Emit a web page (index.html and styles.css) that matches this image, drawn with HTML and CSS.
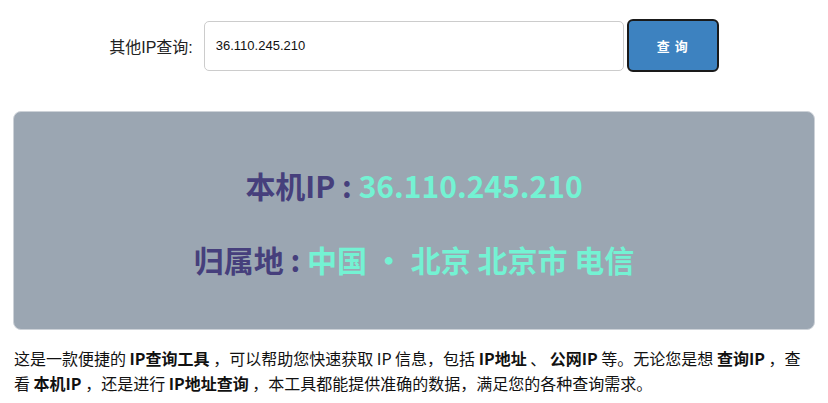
FILE: index.html
```html
<!DOCTYPE html>
<html lang="zh-CN">
<head>
    <meta charset="UTF-8">
    <meta name="viewport" content="width=device-width, initial-scale=1.0">
    <title>IP查询</title>
    <link rel="stylesheet" href="styles.css">
</head>
<body>
    <div class="page">
        <!-- 查询栏 -->
        <div class="search-bar">
            <label class="search-label" for="ip-input">其他IP查询:</label>
            <input type="text" id="ip-input" class="search-input" value="36.110.245.210">
            <button class="search-btn">查 询</button>
        </div>

        <!-- 结果 -->
        <div class="result-box">
            <div class="result-line">
                <span class="result-key">本机IP :</span>
                <span class="result-val">36.110.245.210</span>
            </div>
            <div class="result-line">
                <span class="result-key">归属地 :</span>
                <span class="result-val">中国 ・ 北京 北京市 电信</span>
            </div>
        </div>

        <p class="intro">
            这是一款便捷的 <b>IP查询工具</b> ，可以帮助您快速获取 IP 信息，包括 <b>IP地址</b> 、 <b>公网IP</b> 等。无论您是想 <b>查询IP</b> ，查看 <b>本机IP</b> ，还是进行 <b>IP地址查询</b> ，本工具都能提供准确的数据，满足您的各种查询需求。
        </p>
    </div>
</body>
</html>
```

FILE: styles.css
```css
body {
    margin: 0;
    background: #fff;
    color: #111;
    font-family: "Noto Sans CJK SC", sans-serif;
}
.page {
    padding: 19px 13px 0;
}
.search-bar {
    display: flex;
    align-items: center;
    justify-content: center;
}
.search-label {
    font-family: "Liberation Sans", "Noto Sans CJK SC", sans-serif;
    font-size: 16px;
    color: #222;
    margin-right: 11px;
}
.search-input {
    box-sizing: border-box;
    width: 420px;
    height: 50px;
    border: 1px solid #ccc;
    border-radius: 5px;
    padding: 0 11px;
    font-family: "Liberation Sans", sans-serif;
    font-size: 13px;
    color: #111;
    outline: none;
}
.search-btn {
    box-sizing: border-box;
    width: 92px;
    height: 53px;
    margin-left: 3px;
    border: 2px solid #1a1a1a;
    border-radius: 6px;
    background: #3d82c0;
    color: #fff;
    font-family: "Noto Sans CJK SC", sans-serif;
    font-size: 13px;
    font-weight: bold;
    letter-spacing: 1px;
}
.result-box {
    margin-top: 39px;
    height: 219px;
    box-sizing: border-box;
    background: #9ba6b2;
    border: 1px solid #cdd2d8;
    border-radius: 8px;
    display: flex;
    flex-direction: column;
    justify-content: center;
    align-items: center;
    gap: 34px;
    padding-top: 2px;
}
.result-line {
    font-size: 30px;
    font-weight: bold;
    line-height: 40px;
}
.result-key {
    color: #463f7c;
}
.result-val {
    color: #74f2d3;
}
.intro {
    margin: 16px 1px 0;
    font-size: 16px;
    line-height: 25px;
    color: #111;
}
.intro b {
    font-weight: bold;
}
```
